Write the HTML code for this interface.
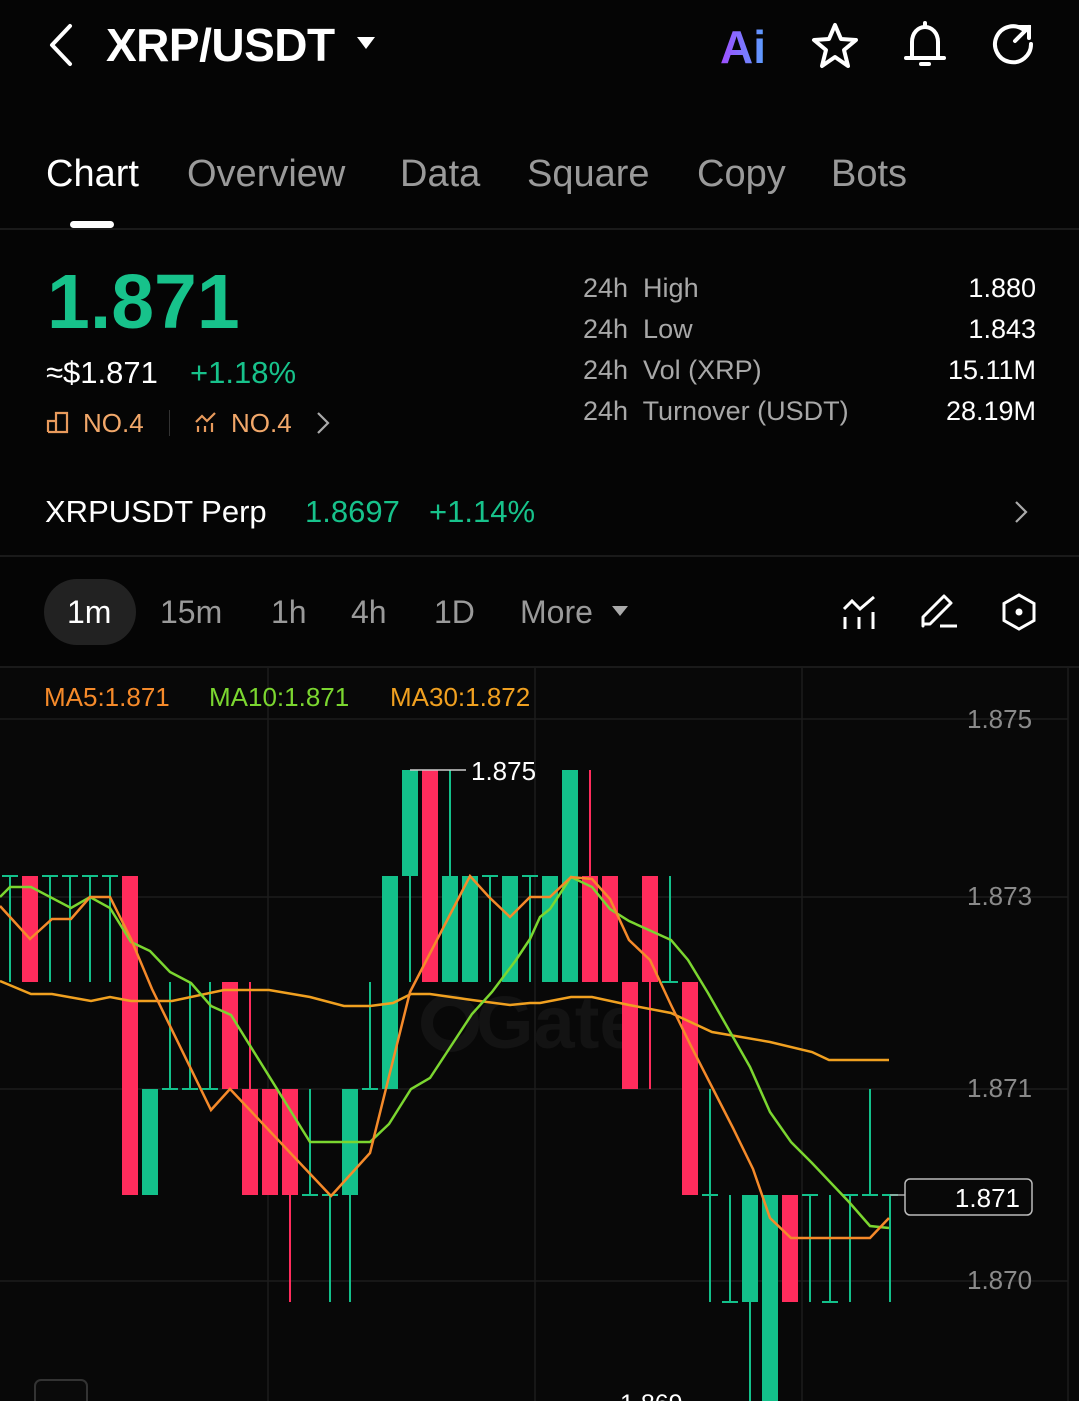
<!DOCTYPE html>
<html><head><meta charset="utf-8"><style>
*{margin:0;padding:0;box-sizing:border-box}
body{width:1079px;height:1401px;background:#050505;color:#fff;font-family:"Liberation Sans",sans-serif;position:relative;overflow:hidden}
.a{position:absolute;white-space:nowrap}
.g{color:#17c28b}
.gr{color:#9a9a9a}
</style></head><body>
<!-- header -->
<svg class="a" style="left:44px;top:22px" width="34" height="46" viewBox="0 0 34 46"><path d="M26 4L8 23L26 42" stroke="#fff" stroke-width="4" fill="none" stroke-linecap="round" stroke-linejoin="round"/></svg>
<div class="a" style="left:106px;top:18px;font-size:46px;font-weight:bold;letter-spacing:-0.5px">XRP/USDT</div>
<svg class="a" style="left:356px;top:36px" width="20" height="14"><path d="M1 1H19L10 13Z" fill="#fff"/></svg>
<div class="a" style="left:720px;top:20px;font-size:46px;font-weight:bold;background:linear-gradient(90deg,#a04cff,#5aa0ff);-webkit-background-clip:text;color:transparent">Ai</div>
<svg class="a" style="left:810px;top:22px" width="50" height="48" viewBox="0 0 50 48"><path d="M25 3L31 17L46 18L34 28L38 44L25 35L12 44L16 28L4 18L19 17Z" stroke="#fff" stroke-width="4" fill="none" stroke-linejoin="round"/></svg>
<svg class="a" style="left:900px;top:20px" width="50" height="50" viewBox="0 0 50 50"><path d="M12 38V22C12 13 18 7 25 7C32 7 38 13 38 22V38M6 38H44M21 44H29M25 3V7" stroke="#fff" stroke-width="4" fill="none" stroke-linecap="round"/></svg>
<svg class="a" style="left:988px;top:20px" width="50" height="50" viewBox="0 0 50 50"><path d="M36 10A18 18 0 1 0 43 24M30 7H41V18M41 7L27 21" stroke="#fff" stroke-width="4" fill="none" stroke-linecap="round"/></svg>
<!-- tabs -->
<div class="a" style="left:46px;top:153px;font-size:38px">Chart</div>
<div class="a gr" style="left:187px;top:153px;font-size:38px">Overview</div>
<div class="a gr" style="left:400px;top:153px;font-size:38px">Data</div>
<div class="a gr" style="left:527px;top:153px;font-size:38px">Square</div>
<div class="a gr" style="left:697px;top:153px;font-size:38px">Copy</div>
<div class="a gr" style="left:831px;top:153px;font-size:38px">Bots</div>
<div class="a" style="left:70px;top:221px;width:44px;height:7px;border-radius:4px;background:#fff"></div>
<div class="a" style="left:0;top:228px;width:1079px;height:2px;background:#1a1a1a"></div>
<!-- price -->
<div class="a g" style="left:47px;top:258px;font-size:77px;font-weight:bold">1.871</div>
<div class="a" style="left:46px;top:355px;font-size:31px">≈$1.871</div>
<div class="a g" style="left:190px;top:355px;font-size:31px">+1.18%</div>
<svg class="a" style="left:46px;top:410px" width="24" height="24" viewBox="0 0 24 24"><path d="M2 22V11H10V22M10 22V3H21V22H2" stroke="#e89a5c" stroke-width="2.2" fill="none"/></svg>
<div class="a" style="left:83px;top:408px;font-size:26px;color:#f2a86a">NO.4</div>
<div class="a" style="left:169px;top:410px;width:1px;height:26px;background:#333"></div>
<svg class="a" style="left:195px;top:411px" width="24" height="24" viewBox="0 0 24 24"><path d="M1 11L7 5L12 10L20 2M3 21V15M10 21V15M17 21V12" stroke="#e89a5c" stroke-width="2.2" fill="none"/></svg>
<div class="a" style="left:231px;top:408px;font-size:26px;color:#f2a86a">NO.4</div>
<svg class="a" style="left:316px;top:411px" width="14" height="24"><path d="M2 2L12 12L2 22" stroke="#aaa" stroke-width="2.2" fill="none"/></svg>
<!-- stats -->
<div class="a" style="left:583px;top:268px;font-size:27px;line-height:41px;color:#a8a8a8">24h&nbsp; High<br>24h&nbsp; Low<br>24h&nbsp; Vol (XRP)<br>24h&nbsp; Turnover (USDT)</div>
<div class="a" style="right:43px;top:268px;font-size:27px;line-height:41px;text-align:right">1.880<br>1.843<br>15.11M<br>28.19M</div>
<!-- perp -->
<div class="a" style="left:45px;top:494px;font-size:31px">XRPUSDT Perp</div>
<div class="a g" style="left:305px;top:494px;font-size:31px">1.8697</div>
<div class="a g" style="left:429px;top:494px;font-size:31px">+1.14%</div>
<svg class="a" style="left:1014px;top:500px" width="14" height="24"><path d="M2 2L12 12L2 22" stroke="#aaa" stroke-width="2.2" fill="none"/></svg>
<div class="a" style="left:0;top:555px;width:1079px;height:2px;background:#1a1a1a"></div>
<!-- intervals -->
<div class="a" style="left:44px;top:579px;width:92px;height:66px;border-radius:33px;background:#222"></div>
<div class="a" style="left:67px;top:594px;font-size:32px">1m</div>
<div class="a gr" style="left:160px;top:594px;font-size:32px">15m</div>
<div class="a gr" style="left:271px;top:594px;font-size:32px">1h</div>
<div class="a gr" style="left:351px;top:594px;font-size:32px">4h</div>
<div class="a gr" style="left:434px;top:594px;font-size:32px">1D</div>
<div class="a gr" style="left:520px;top:594px;font-size:32px">More</div>
<svg class="a" style="left:611px;top:605px" width="18" height="12"><path d="M1 1H17L9 11Z" fill="#aaa"/></svg>
<svg class="a" style="left:840px;top:593px" width="40" height="40" viewBox="0 0 40 40"><path d="M4 16L12 8L20 16L34 4M5 24V36M19 24V36M33 19V36" stroke="#fff" stroke-width="3" fill="none"/></svg>
<svg class="a" style="left:919px;top:591px" width="42" height="42" viewBox="0 0 42 42"><path d="M4 35V26L25 5L32 12L11 33H4ZM21 35H38" stroke="#fff" stroke-width="3" fill="none" stroke-linejoin="round"/></svg>
<svg class="a" style="left:1000px;top:592px" width="38" height="40" viewBox="0 0 38 40"><path d="M19 3L34 11.5V28.5L19 37L4 28.5V11.5Z" stroke="#fff" stroke-width="3" fill="none"/><circle cx="19" cy="20" r="3.5" fill="#fff"/></svg>
<div class="a" style="left:0;top:666px;width:1079px;height:2px;background:#1a1a1a"></div>
<!-- chart -->
<svg class="a" style="left:0;top:0" width="1079" height="1401">
<rect x="0" y="668" width="1079" height="733" fill="#080808"/>
<g stroke="#1c1c1c" stroke-width="1.5">
<path d="M0 719H1068M0 897H1068M0 1089H1068M0 1281H1068M268 668V1401M535 668V1401M802 668V1401M1068 668V1401"/>
</g>
<text x="476" y="1048" font-family="Liberation Sans" font-size="74" font-weight="bold" fill="#131313">Gate</text>
<circle cx="450" cy="1023" r="23" stroke="#131313" stroke-width="12" fill="none"/>
<g fill="#ff2c5c">
<rect x="22" y="876" width="16" height="106"/><rect x="122" y="876" width="16" height="319"/>
<rect x="222" y="982" width="16" height="107"/><rect x="242" y="1089" width="16" height="106"/>
<rect x="262" y="1089" width="16" height="106"/><rect x="282" y="1089" width="16" height="106"/>
<rect x="422" y="770" width="16" height="212"/><rect x="582" y="876" width="16" height="106"/>
<rect x="602" y="876" width="16" height="106"/><rect x="622" y="982" width="16" height="107"/>
<rect x="642" y="876" width="16" height="106"/><rect x="682" y="982" width="16" height="213"/>
<rect x="782" y="1195" width="16" height="107"/>
</g>
<path d="M250 982V1089M290 1195V1302M590 770V876M650 982V1089" stroke="#ff2c5c" stroke-width="2"/>
<g fill="#13c08a">
<rect x="142" y="1089" width="16" height="106"/><rect x="342" y="1089" width="16" height="106"/>
<rect x="382" y="876" width="16" height="213"/><rect x="402" y="770" width="16" height="106"/>
<rect x="442" y="876" width="16" height="106"/><rect x="462" y="876" width="16" height="106"/>
<rect x="502" y="876" width="16" height="106"/><rect x="542" y="876" width="16" height="106"/>
<rect x="562" y="770" width="16" height="212"/><rect x="742" y="1195" width="16" height="107"/>
<rect x="762" y="1195" width="16" height="206"/>
</g>
<path stroke="#13c08a" stroke-width="2" fill="none" d="
M2 876H18M10 876V982 M42 876H58M50 876V982 M62 876H78M70 876V982 M82 876H98M90 876V982 M102 876H118M110 876V982
M162 1089H178M170 982V1089 M182 1089H198M190 982V1089 M202 1089H218M210 982V1089
M302 1195H318M310 1089V1195 M322 1195H338M330 1195V1302 M350 1195V1302 M362 1089H378M370 982V1089
M410 876V982 M450 770V876 M482 876H498M490 876V982 M522 876H538M530 876V982
M662 982H678M670 876V982 M702 1195H718M710 1089V1302 M722 1302H738M730 1195V1302 M750 1302V1401
M802 1195H818M810 1195V1302 M822 1302H838M830 1195V1302 M842 1195H858M850 1195V1302 M862 1195H878M870 1089V1195 M882 1195H898M890 1195V1302"/>
<path d="M410 770H466" stroke="#ccc" stroke-width="1.5"/>
<text x="471" y="780" font-family="Liberation Sans" font-size="26" fill="#fff">1.875</text>
<polyline fill="none" stroke="#f0a020" stroke-width="2.5" points="0,981 31,994 52,994 91,1001 110,997 131,1001 172,1001 224,990 269,990 310,997 344,1006 370,1006 393,1003 411,994 430,994 472,1000 510,1005 530,1003 540,1003 571,997 592,997 629,1005 671,1013 712,1032 770,1042 812,1052 829,1060 889,1060"/>
<polyline fill="none" stroke="#7bd630" stroke-width="2.5" points="0,897 10,887 31,887 71,908 90,897 110,908 131,942 150,951 170,972 191,983 211,1006 231,1015 310,1142 370,1142 389,1124 411,1089 430,1078 451,1046 472,1014 492,992 516,960 530,939 540,917 550,909 571,877 592,887 610,909 629,921 671,940 688,960 708,993 729,1030 750,1067 770,1112 791,1142 812,1163 849,1202 870,1226 889,1228"/>
<polyline fill="none" stroke="#f58a2a" stroke-width="2.5" points="0,906 30,939 52,919 71,919 90,897 110,897 131,939 152,989 211,1110 230,1089 331,1196 370,1153 410,992 470,876 489,897 510,917 530,897 550,897 571,877 592,879 610,899 629,940 650,960 671,1005 691,1046 712,1087 733,1128 753,1169 770,1218 791,1238 870,1238 889,1218"/>
<g font-family="Liberation Sans" font-size="26" fill="#8a8a8a">
<text x="967" y="728">1.875</text><text x="967" y="905">1.873</text><text x="967" y="1097">1.871</text><text x="967" y="1289">1.870</text>
</g>
<path d="M890 1195H905" stroke="#aaa" stroke-width="1.5"/>
<rect x="905" y="1179" width="127" height="36" rx="5" fill="#080808" stroke="#bbb" stroke-width="1.5"/>
<text x="1020" y="1207" text-anchor="end" font-family="Liberation Sans" font-size="26" fill="#fff">1.871</text>
<g font-family="Liberation Sans" font-size="26">
<text x="44" y="706" fill="#f58a2a">MA5:1.871</text>
<text x="209" y="706" fill="#7bd630">MA10:1.871</text>
<text x="390" y="706" fill="#f0a020">MA30:1.872</text>
</g>
<rect x="35" y="1380" width="52" height="40" rx="6" fill="#0a0a0a" stroke="#333" stroke-width="2"/>
<text x="620" y="1412" font-family="Liberation Sans" font-size="25" fill="#fff">1.869</text>
</svg>
</body></html>
